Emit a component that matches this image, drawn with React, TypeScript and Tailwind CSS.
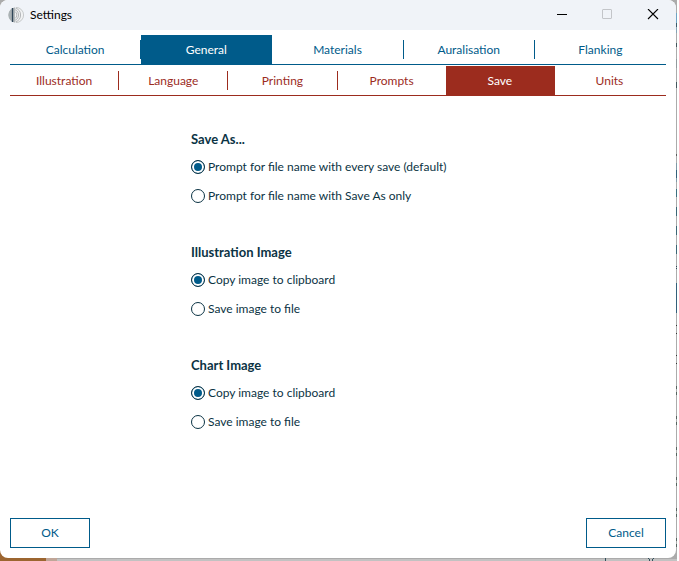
import { useState } from 'react';

const TABS = ['Calculation', 'General', 'Materials', 'Auralisation', 'Flanking'];
const SUB_TABS = ['Illustration', 'Language', 'Printing', 'Prompts', 'Save', 'Units'];

const GROUPS = [
  {
    id: 'save-as',
    title: 'Save As...',
    options: ['Prompt for file name with every save (default)', 'Prompt for file name with Save As only'],
  },
  {
    id: 'illustration-image',
    title: 'Illustration Image',
    options: ['Copy image to clipboard', 'Save image to file'],
  },
  {
    id: 'chart-image',
    title: 'Chart Image',
    options: ['Copy image to clipboard', 'Save image to file'],
  },
];

// [y, height, colour] of what shows past the right edge of the window
const EDGE_MARKS: [number, number, string][] = [
  [13, 10, '#6fa3c4'],
  [23, 4, '#3d5a6a'],
  [27, 6, '#86a4b5'],
  [43, 4, '#44565c'],
  [59, 9, '#92999c'],
  [82, 6, '#44565c'],
  [154, 2, '#5c5c5c'],
  [163, 7, '#7f99a6'],
  [170, 8, '#33607a'],
  [178, 4, '#7f99a6'],
  [189, 8, '#3b7080'],
  [207, 9, '#3b6675'],
  [226, 9, '#3b6675'],
  [245, 9, '#3b6675'],
  [266, 1, '#2f4858'],
  [268, 1, '#2f4858'],
  [283, 30, '#33607a'],
  [325, 1, '#333333'],
  [333, 1, '#333333'],
  [355, 1, '#333333'],
  [363, 1, '#333333'],
  [386, 3, '#56645f'],
  [392, 3, '#56645f'],
  [416, 3, '#56645f'],
  [422, 3, '#56645f'],
  [447, 3, '#56645f'],
  [453, 3, '#56645f'],
  [477, 3, '#56645f'],
  [483, 3, '#56645f'],
  [508, 3, '#56645f'],
  [514, 3, '#56645f'],
  [538, 3, '#56645f'],
  [544, 3, '#56645f'],
];

function AppIcon() {
  return (
    <svg className="w-4 h-4 shrink-0" viewBox="0 0 16 16" fill="none">
      <circle cx="8" cy="8" r="7.8" fill="#f1f2f3" />
      <path d="M7 0.3A7.8 7.8 0 0 0 7 15.7Z" fill="#b3b8ba" />
      <path d="M3 2.2A7.8 7.8 0 0 0 3 13.8Z" fill="#a9b1b4" />
      <path d="M4.5 1V15" stroke="#2f4557" strokeWidth="1.4" />
      <path d="M7 4.5A4.2 4.2 0 0 1 7 11.5" stroke="#a3a6a8" strokeWidth="0.8" />
      <path d="M7 2.6A5.8 5.8 0 0 1 7 13.4" stroke="#a3a6a8" strokeWidth="0.8" />
      <path d="M7.5 1.2A7.1 7.1 0 0 1 7.5 14.8" stroke="#a3a6a8" strokeWidth="0.8" />
      <path d="M8 0.4A7.6 7.6 0 0 1 8 15.6" stroke="#b4b7b9" strokeWidth="0.7" />
    </svg>
  );
}

function TitleBar() {
  return (
    <header className="h-[30px] shrink-0 flex items-center justify-between pl-2 pr-[17px] bg-[#f0f3f8] rounded-t-lg">
      <div className="flex items-center gap-1.5 text-black">
        <AppIcon />
        <h1>Settings</h1>
      </div>
      <div className="flex items-center gap-[33px]">
        <button aria-label="Minimize">
          <svg className="block w-3 h-3" viewBox="0 0 12 12" fill="none">
            <path d="M0 5.5H10" stroke="#000" />
          </svg>
        </button>
        <button aria-label="Maximize" disabled>
          <svg className="block w-3 h-3" viewBox="0 0 12 12" fill="none">
            <rect x="0.5" y="0.5" width="9" height="9" rx="0.5" stroke="#c3c5c9" />
          </svg>
        </button>
        <button aria-label="Close">
          <svg className="block w-3 h-3" viewBox="0 0 12 12" fill="none">
            <path d="M1 0L11 10M11 0L1 10" stroke="#000" strokeWidth="1.1" />
          </svg>
        </button>
      </div>
    </header>
  );
}

export default function App() {
  const [tab, setTab] = useState('General');
  const [subTab, setSubTab] = useState('Save');
  const [choices, setChoices] = useState<Record<string, number>>({});

  return (
    <div className="relative min-h-screen flex flex-col pr-[3px] pb-[3px] bg-[#ababab] font-['Lato','Open_Sans',sans-serif] text-[12px] leading-4">
      {/* Desktop showing around the window */}
      <svg className="absolute right-0 top-0 w-[3px] h-[561px]" viewBox="0 0 3 561" shapeRendering="crispEdges">
        {EDGE_MARKS.map(([y, h, fill]) => (
          <rect key={y} x="0" y={y} width="1" height={h} fill={fill} />
        ))}
        <rect x="1" y="0" width="2" height="561" fill="#ffffff" />
      </svg>
      <svg className="absolute left-0 bottom-0 w-[677px] h-3" viewBox="0 0 677 12" shapeRendering="crispEdges">
        <rect x="0" y="0" width="46" height="12" fill="#9c6530" />
        <rect x="46" y="9" width="11" height="3" fill="#c0a698" />
        <rect x="57" y="10" width="620" height="2" fill="#c2c2c2" />
        <path d="M605.5 9V12M648.5 9L650 12M653.5 9L652 12" stroke="#33505c" />
      </svg>

      <div className="relative grow flex flex-col bg-white rounded-lg">
        <TitleBar />

        <div className="grow flex flex-col px-2.5 pt-[5px] pb-2.5">
          <nav className="flex border-b border-[#005b8a]">
            {TABS.map((name, i) => (
              <button
                key={name}
                onClick={() => setTab(name)}
                className={
                  name === tab
                    ? 'flex-1 h-[29px] flex items-center bg-[#005b8a] text-white'
                    : 'flex-1 h-[29px] flex items-center text-[#005b8a]'
                }
              >
                <span
                  className={
                    i < TABS.length - 1 ? 'flex-1 h-[19px] leading-[19px] border-r border-[#005b8a]' : 'flex-1 h-[19px] leading-[19px]'
                  }
                >
                  {name}
                </span>
              </button>
            ))}
          </nav>

          <nav className="flex mt-px pr-0.5 border-b border-[#9c2c1e]">
            {SUB_TABS.map((name, i) => (
              <button
                key={name}
                onClick={() => setSubTab(name)}
                className={
                  name === subTab
                    ? 'flex-1 h-[29px] -ml-px flex items-center bg-[#9c2c1e] text-white'
                    : 'flex-1 h-[29px] flex items-center text-[#9c2c1e]'
                }
              >
                <span
                  className={
                    i < SUB_TABS.length - 1 ? 'flex-1 h-[19px] leading-[19px] border-r border-[#9c2c1e]' : 'flex-1 h-[19px] leading-[19px]'
                  }
                >
                  {name}
                </span>
              </button>
            ))}
          </nav>

          <main className="grow flex flex-col gap-[29px] pt-[30px] pl-[181px] text-[#0b3344]">
            {GROUPS.map((group) => (
              <fieldset key={group.id}>
                <legend className="h-[26px] leading-[26px] text-[13px] font-bold">{group.title}</legend>
                {group.options.map((option, i) => (
                  <label key={option} className="h-[29px] flex items-center gap-[3px]">
                    <input
                      type="radio"
                      name={group.id}
                      checked={(choices[group.id] ?? 0) === i}
                      onChange={() => setChoices({ ...choices, [group.id]: i })}
                      className="appearance-none w-3.5 h-3.5 shrink-0 rounded-full border border-[#0b3344] bg-white checked:bg-[#005b8a] checked:shadow-[inset_0_0_0_2px_white]"
                    />
                    {option}
                  </label>
                ))}
              </fieldset>
            ))}
          </main>

          <footer className="flex justify-between text-[#005b8a]">
            <button className="w-20 h-[30px] border border-[#005b8a]">OK</button>
            <button className="w-20 h-[30px] border border-[#005b8a]">Cancel</button>
          </footer>
        </div>
      </div>
    </div>
  );
}
